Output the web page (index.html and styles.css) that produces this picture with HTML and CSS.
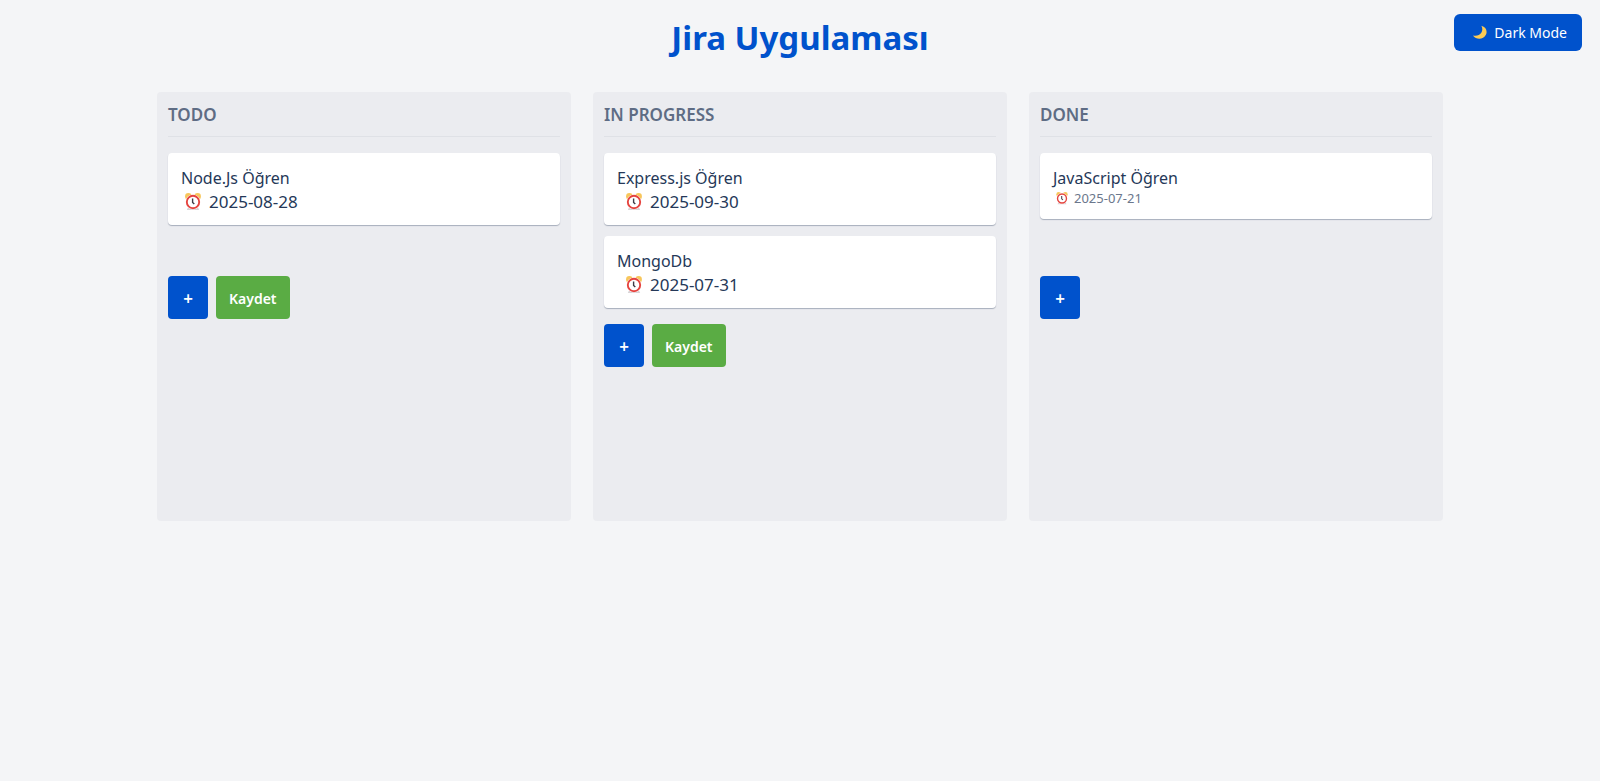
FILE: index.html
```html
<!DOCTYPE html>
<html lang="tr">
<head>
<meta charset="utf-8">
<meta name="viewport" content="width=device-width, initial-scale=1">
<title>Jira Uygulaması</title>
<link rel="stylesheet" href="styles.css">
</head>
<body>
<svg class="symbols" aria-hidden="true">
  <symbol id="alarm" viewBox="0 0 16 18">
    <path d="M3 14.500h10l1.200 2.500h-12.400z" fill="#d8d3d6"/>
    <circle cx="3.400" cy="3.400" r="3.300" fill="#f7c65b"/>
    <circle cx="12.600" cy="3.400" r="3.300" fill="#f7c65b"/>
    <circle cx="8" cy="9" r="7.600" fill="#fff"/>
    <circle cx="8" cy="9" r="6.200" fill="#fff" stroke="#e5443f" stroke-width="1.900"/>
    <path d="M7.600 5.500v3.900l1.700 1.700" fill="none" stroke="#3c3a45" stroke-width="1.400"/>
  </symbol>
  <symbol id="moon" viewBox="0 0 16 16">
    <path d="M10 .8C14.800 2 16.800 6.500 14.800 10.500 12.200 15.800 4.500 16.200 1 11.200c4 .8 7.200-.3 8.900-3C11.400 5.800 11.300 3 10 .8z" fill="#fbcb55"/>
  </symbol>
</svg>
<header class="header">
  <h1 class="title">Jira Uygulaması</h1>
  <button class="theme-toggle" type="button"><svg class="moon" aria-hidden="true"><use href="#moon"/></svg>Dark Mode</button>
</header>
<main class="board">
  <section class="column">
    <h2 class="column-title">TODO</h2>
    <div class="list">
      <article class="card">
        <p class="task">Node.Js Öğren</p>
        <p class="due"><svg class="alarm" aria-hidden="true"><use href="#alarm"/></svg><time>2025-08-28</time></p>
      </article>
    </div>
    <div class="actions">
      <button class="btn add" type="button">+</button>
      <button class="btn save" type="button">Kaydet</button>
    </div>
  </section>
  <section class="column">
    <h2 class="column-title">IN PROGRESS</h2>
    <div class="list">
      <article class="card">
        <p class="task">Express.js Öğren</p>
        <p class="due indented"><svg class="alarm" aria-hidden="true"><use href="#alarm"/></svg><time>2025-09-30</time></p>
      </article>
      <article class="card">
        <p class="task">MongoDb</p>
        <p class="due indented"><svg class="alarm" aria-hidden="true"><use href="#alarm"/></svg><time>2025-07-31</time></p>
      </article>
    </div>
    <div class="actions">
      <button class="btn add" type="button">+</button>
      <button class="btn save" type="button">Kaydet</button>
    </div>
  </section>
  <section class="column">
    <h2 class="column-title">DONE</h2>
    <div class="list">
      <article class="card">
        <p class="task">JavaScript Öğren</p>
        <p class="due small"><svg class="alarm" aria-hidden="true"><use href="#alarm"/></svg><time>2025-07-21</time></p>
      </article>
    </div>
    <div class="actions">
      <button class="btn add" type="button">+</button>
    </div>
  </section>
</main>
</body>
</html>
```
FILE: styles.css
```css
* {
  box-sizing: border-box;
  margin: 0;
}

body {
  padding: 14px 18px;
  background: #f4f5f7;
  color: #253858;
  font-family: "Noto Sans", "Open Sans", sans-serif;
  font-size: 17px;
  line-height: 23px;
}

.symbols {
  position: absolute;
  width: 0;
  height: 0;
}

.header {
  display: grid;
  grid-template-columns: 1fr auto 1fr;
  align-items: start;
  margin-bottom: 30px;
}

.title {
  grid-column: 2;
  color: #0052cc;
  font-size: 33px;
  font-weight: 700;
  line-height: 48px;
}

.theme-toggle {
  display: flex;
  align-items: center;
  justify-self: end;
  gap: 7px;
  padding: 7px 15px 7px 18px;
  border: 0;
  border-radius: 6px;
  background: #0052cc;
  color: #fff;
  font: 400 14px/23px "Noto Sans", "Open Sans", sans-serif;
}

.moon {
  width: 15px;
  height: 15px;
}

.board {
  display: grid;
  grid-template-columns: repeat(3, 1fr);
  gap: 22px;
  max-width: 1286px;
  margin: 0 auto;
}

.column {
  min-height: 429px;
  padding: 11px;
  border-radius: 4px;
  background: #ebecf0;
}

.column-title {
  padding-bottom: 10px;
  border-bottom: 1px solid #dfe1e6;
  color: #5e6c84;
  font-size: 17px;
  font-weight: 600;
}

.list {
  display: flex;
  flex-direction: column;
  gap: 11px;
  min-height: 107px;
  margin-top: 16px;
}

.card {
  padding: 14px 13px 12px;
  border-radius: 4px;
  background: #fff;
  box-shadow: 0 1px 1px rgba(9, 30, 66, 0.3);
}

.task {
  font-size: 16px;
}

.due {
  display: flex;
  align-items: center;
  gap: 8px;
  padding-left: 4px;
}

.indented {
  padding-left: 9px;
}

.alarm {
  width: 16px;
  height: 18px;
}

.small {
  gap: 6px;
  padding-left: 3px;
  color: #6b778c;
  font-size: 13px;
  line-height: 17px;
}

.small .alarm {
  width: 12px;
  height: 13px;
}

.actions {
  display: flex;
  gap: 8px;
  margin-top: 16px;
}

.btn {
  padding: 11px 13px 9px;
  border: 0;
  border-radius: 4px;
  color: #fff;
  font: 600 14px/23px "Noto Sans", "Open Sans", sans-serif;
}

.add {
  min-width: 40px;
  background: #0052cc;
  font-size: 17px;
}

.save {
  background: #5aac44;
}
```
